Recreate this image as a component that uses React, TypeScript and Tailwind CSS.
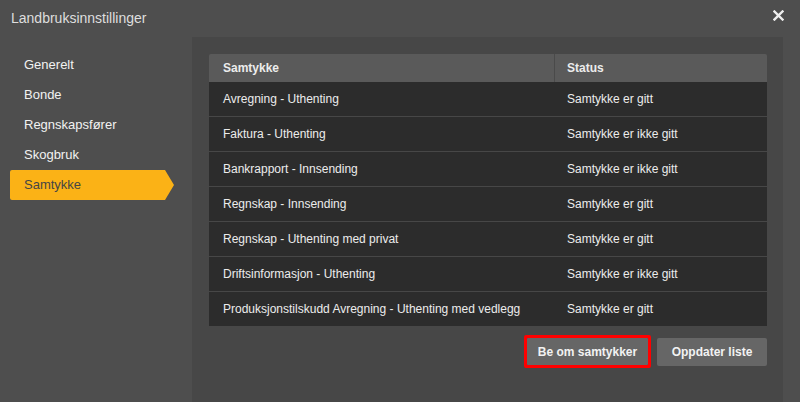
import React from 'react';

const menu = ['Generelt', 'Bonde', 'Regnskapsfører', 'Skogbruk', 'Samtykke'];

const rows: [string, string][] = [
  ['Avregning - Uthenting', 'Samtykke er gitt'],
  ['Faktura - Uthenting', 'Samtykke er ikke gitt'],
  ['Bankrapport - Innsending', 'Samtykke er ikke gitt'],
  ['Regnskap - Innsending', 'Samtykke er gitt'],
  ['Regnskap - Uthenting med privat', 'Samtykke er gitt'],
  ['Driftsinformasjon - Uthenting', 'Samtykke er ikke gitt'],
  ['Produksjonstilskudd Avregning - Uthenting med vedlegg', 'Samtykke er gitt'],
];

const App: React.FC = () => {
  const active = 'Samtykke';

  return (
    <div className="w-[800px] h-[402px] bg-[#4e4e4e] flex flex-col overflow-hidden font-['Liberation_Sans',Arial,sans-serif]">
      {/* title bar */}
      <div className="h-[37px] flex items-center justify-between pl-[11px] pr-[16px] shrink-0">
        <span className="text-[14px] text-[#dedede]">Landbruksinnstillinger</span>
        <svg width="11" height="11" viewBox="0 0 11 11" className="mt-[-6px]">
          <path d="M1.5 1.5 L9.5 9.5 M9.5 1.5 L1.5 9.5" stroke="#eeeeee" strokeWidth="2.4" strokeLinecap="square" />
        </svg>
      </div>

      <div className="flex flex-1 min-h-0">
        {/* sidebar */}
        <div className="w-[192px] shrink-0 pt-[13px] pl-[10px]">
          {menu.map(item =>
            item === active ? (
              <div
                key={item}
                className="h-[30px] w-[164px] flex items-center pl-[14px] bg-[#fbb216] text-[#454545] text-[13px] rounded-l-[2px] [clip-path:polygon(0_0,calc(100%-9px)_0,100%_50%,calc(100%-9px)_100%,0_100%)]"
              >
                {item}
              </div>
            ) : (
              <div key={item} className="h-[30px] flex items-center pl-[14px] text-[13px] text-[#f2f2f2]">
                {item}
              </div>
            )
          )}
        </div>

        {/* content */}
        <div className="w-[591px] shrink-0 bg-[#474747] pt-[17px] pl-[17px] pr-[16px]">
          <div className="w-[558px] rounded-t-[2px] overflow-hidden">
            <div className="flex h-[28px] bg-[#5a5a5a] text-[12px] font-bold text-[#ececec]">
              <div className="w-[346px] flex items-center pl-[14px] border-r border-[#4a4a4a]">Samtykke</div>
              <div className="flex-1 flex items-center pl-[12px]">Status</div>
            </div>
            {rows.map(([name, status], i) => (
              <div
                key={name}
                className={
                  i > 0
                    ? 'flex h-[35px] bg-[#2c2c2c] text-[12px] text-[#ececec] border-t border-[#474747]'
                    : 'flex h-[34px] bg-[#2c2c2c] text-[12px] text-[#ececec]'
                }
              >
                <div className="w-[346px] flex items-center pl-[14px]">{name}</div>
                <div className="flex-1 flex items-center pl-[12px]">{status}</div>
              </div>
            ))}
          </div>

          <div className="w-[558px] flex justify-end items-center gap-[6px] mt-[9px]">
            <div className="border-[3px] border-[#ff0000] rounded-[2px]">
              <button className="h-[27px] w-[121px] bg-[#666666] text-[12px] font-bold text-[#f2f2f2] rounded-[1px]">
                Be om samtykker
              </button>
            </div>
            <button className="h-[28px] w-[110px] bg-[#666666] text-[12px] font-bold text-[#f2f2f2] rounded-[2px]">
              Oppdater liste
            </button>
          </div>
        </div>
      </div>
    </div>
  );
};

export default App;
